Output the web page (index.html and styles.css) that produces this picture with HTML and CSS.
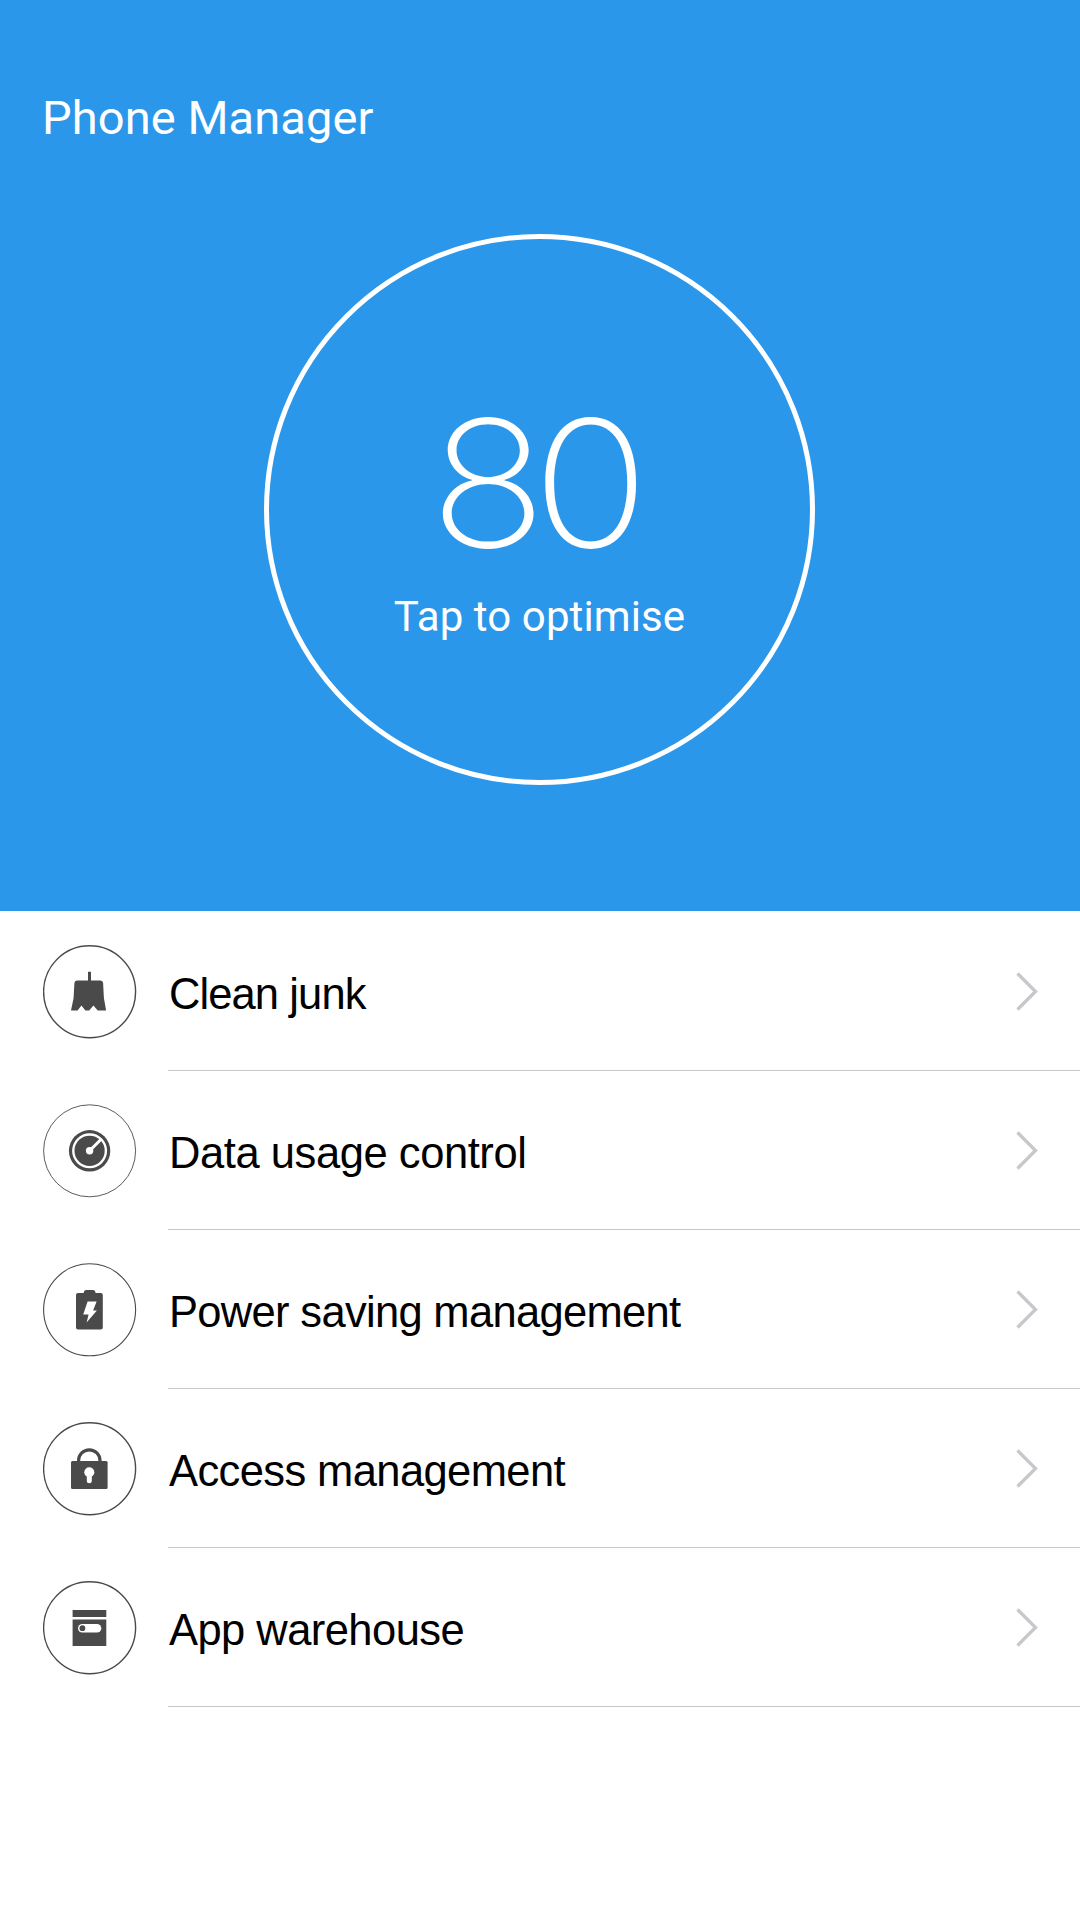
FILE: index.html
```html
<!DOCTYPE html>
<html lang="en">
<head>
<meta charset="utf-8">
<title>Phone Manager</title>
<link rel="stylesheet" href="styles.css">
</head>
<body>
<header class="hero">
  <h1 class="title">Phone Manager</h1>
  <button class="score" type="button">
    <span class="score-value">80</span>
    <span class="score-hint">Tap to optimise</span>
  </button>
</header>
<ul class="menu">
  <li class="row">
    <svg class="icon" viewBox="0.4 0.2 94 94"><circle class="ring bold" cx="47" cy="47" r="46"/><path class="ink" d="M45.400 27h3v8.700H58q2.300 0 2.500 2.500l.8 15 2.200 12.500h-8.300l-4.400-5-4.200 5h-3.800l-4-5-3.800 5h-6.600l2.600-12.500.8-15q.2-2.500 2.500-2.500h11.100z"/></svg>
    <div class="cell"><span class="label clean">Clean junk</span><svg class="chevron" viewBox="0 0 24 40"><path d="M2.500 2.500l18 18-18 18"/></svg></div>
  </li>
  <li class="row">
    <svg class="icon" viewBox="0.4 0.2 94 94"><circle class="ring" cx="47" cy="47" r="46"/><circle class="ink" cx="47" cy="47" r="20.700"/><circle class="gap" cx="47" cy="47" r="16.300"/><path class="needle" d="M47 47L59 35"/><circle class="paper" cx="47" cy="47" r="3.700"/></svg>
    <div class="cell"><span class="label data">Data usage control</span><svg class="chevron" viewBox="0 0 24 40"><path d="M2.500 2.500l18 18-18 18"/></svg></div>
  </li>
  <li class="row">
    <svg class="icon" viewBox="0.4 0.2 94 94"><circle class="ring mid" cx="47" cy="47" r="46"/><path class="ink" d="M35.400 30.300H41q.5-3 2.500-3h7q2 0 2.500 3h5.200q2 0 2 2v32.400q0 2-2 2H35.400q-2 0-2-2V32.300q0-2 2-2z"/><path class="paper" d="M45 38.700h9l-3.500 9h3.800L44 59.800l2-8.100h-5.400z"/></svg>
    <div class="cell"><span class="label power">Power saving management</span><svg class="chevron" viewBox="0 0 24 40"><path d="M2.500 2.500l18 18-18 18"/></svg></div>
  </li>
  <li class="row">
    <svg class="icon" viewBox="0.4 0.2 94 94"><circle class="ring bold" cx="47" cy="47" r="46"/><path class="shackle" d="M36 40v-1.300a10.700 10.700 0 0 1 21.400 0V40"/><rect class="ink" x="28.400" y="39.300" width="36.600" height="28" rx="1.500"/><circle class="paper" cx="46.700" cy="50.500" r="5"/><rect class="paper" x="44.200" y="50" width="5" height="11.500" rx="2.400"/></svg>
    <div class="cell"><span class="label access">Access management</span><svg class="chevron" viewBox="0 0 24 40"><path d="M2.500 2.500l18 18-18 18"/></svg></div>
  </li>
  <li class="row">
    <svg class="icon" viewBox="0.4 0.2 94 94"><circle class="ring bold" cx="47" cy="47" r="46"/><path class="ink" d="M30 29.200h33.700v7H30zM30 38.800h33.700v26.500H30z"/><rect class="paper" x="35.400" y="43.200" width="23.300" height="8.500" rx="4.250"/><circle class="ink" cx="39.800" cy="47.400" r="2.900"/></svg>
    <div class="cell"><span class="label app">App warehouse</span><svg class="chevron" viewBox="0 0 24 40"><path d="M2.500 2.500l18 18-18 18"/></svg></div>
  </li>
</ul>
</body>
</html>
```

FILE: styles.css
```css
* { box-sizing: border-box; }
body { margin: 0; width: 1080px; height: 1920px; background: #fff; overflow: hidden; }
.hero {
  height: 911px;
  padding-top: 88px;
  display: flex;
  flex-direction: column;
  align-items: center;
  background: #2b97ea;
  color: #fff;
  font-family: Roboto, sans-serif;
}
.title {
  align-self: flex-start;
  margin: 0 0 0 42px;
  height: 146px;
  font-size: 47px;
  font-weight: 400;
  line-height: 60px;
  letter-spacing: 0.1px;
}
.score {
  width: 551px;
  height: 551px;
  margin-right: 2px;
  padding: 119px 0 0;
  border: 5px solid #fff;
  border-radius: 50%;
  background: none;
  color: #fff;
  display: flex;
  flex-direction: column;
  align-items: center;
  font-family: Roboto, sans-serif;
}
.score-value {
  font-family: Inter, sans-serif;
  font-size: 176px;
  font-weight: 200;
  line-height: 250px;
  letter-spacing: -13px;
  margin-right: 13px;
  transform: scaleX(1.1);
}
.score-hint { margin: -16px 0 0 1px; font-size: 42px; line-height: 50px; letter-spacing: 0.1px; }
.menu { margin: 1px 0 0; padding: 0; list-style: none; }
.row { height: 159px; padding-left: 43px; display: flex; align-items: center; }
.icon { width: 94px; height: 94px; flex: none; }
.cell {
  flex: 1;
  height: 159px;
  margin-left: 31px;
  padding: 0 41px 0 1px;
  border-bottom: 1px solid #c8c7cc;
  display: flex;
  align-items: center;
  justify-content: space-between;
}
.label {
  font: 43.500px/56px "Liberation Sans", sans-serif;
  color: #000;
  padding-top: 6px;
}
.clean { letter-spacing: -0.900px; }
.data { letter-spacing: -0.430px; }
.power { letter-spacing: -0.680px; }
.access { letter-spacing: -0.600px; }
.app { letter-spacing: -0.550px; }
.chevron { width: 24px; height: 40px; fill: none; stroke: #c7c7cc; stroke-width: 3.300; }
.ring { fill: none; stroke: #4a4a4a; stroke-width: 0.900; }
.ring.mid { stroke-width: 1.100; }
.ring.bold { stroke-width: 1.400; }
.ink { fill: #4a4a4a; }
.paper { fill: #fff; }
.gap { fill: none; stroke: #fff; stroke-width: 2.400; }
.needle { stroke: #fff; stroke-width: 3; }
.shackle { fill: none; stroke: #4a4a4a; stroke-width: 3.200; }
```
